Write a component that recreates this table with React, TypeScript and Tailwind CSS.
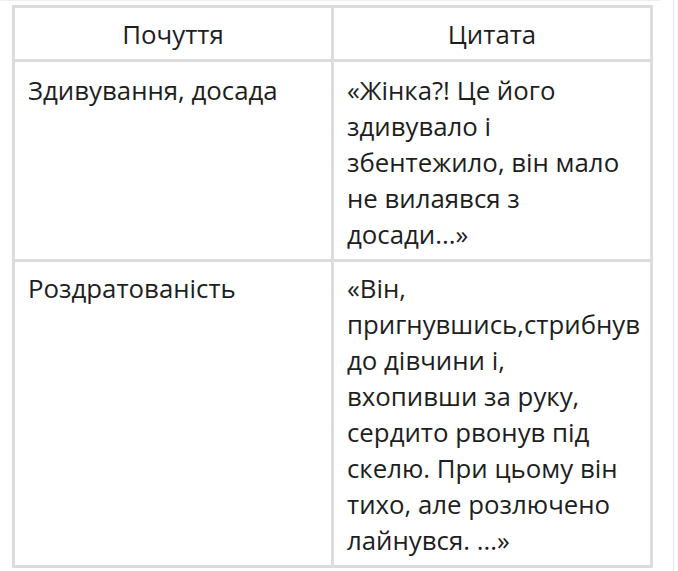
export default function App() {
  const cell = "bg-white px-[13px] text-[25.8px] leading-[36px] text-[#1e1e1e]";

  return (
    <div className="relative h-[571px] w-[678px] bg-white font-['Open_Sans',sans-serif]">
      <div className="absolute left-0 top-0 h-[1px] w-[660px] bg-[#f0f0f0]" />
      <div className="absolute left-[673px] top-0 h-[571px] w-[1px] bg-[#e6e6e6]" />
      <div className="ml-[12px] pt-[5px]">
        <div className="grid w-[641px] grid-cols-[316px_316px] grid-rows-[51px_197px_303px] gap-[3px] bg-[#dcdcdc] p-[3px]">
          <div className={cell + " pt-[8px] text-center"}>Почуття</div>
          <div className={cell + " pt-[8px] text-center"}>Цитата</div>
          <div className={cell + " pt-[10px]"}>Здивування, досада</div>
          <div className={cell + " pt-[10px]"}>«Жінка?! Це його здивувало і збентежило, він мало не вилаявся з досади...»</div>
          <div className={cell + " pt-[8px]"}>Роздратованість</div>
          <div className={cell + " pt-[8px]"}>
            «Він, пригнувшись,стрибнув до дівчини і, вхопивши за руку, сердито рвонув під скелю. При цьому він тихо, але розлючено лайнувся. ...»
          </div>
        </div>
      </div>
    </div>
  );
}
